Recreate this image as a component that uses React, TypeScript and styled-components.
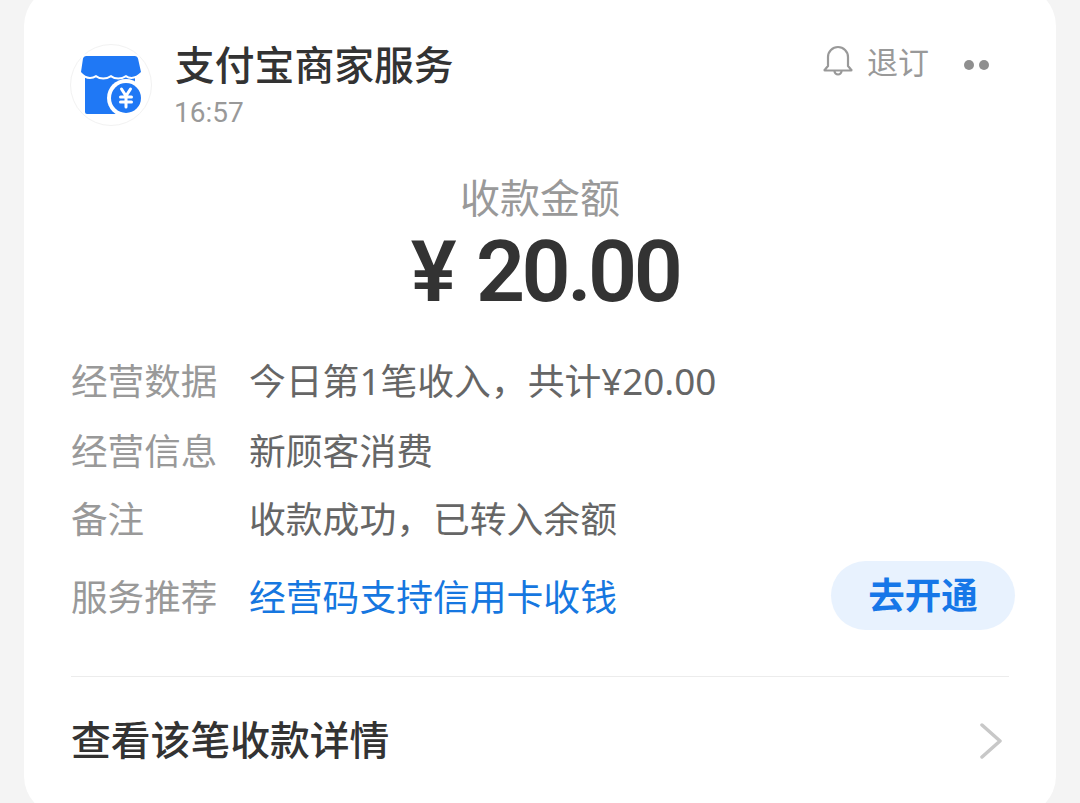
import React from "react";
import styled, { createGlobalStyle } from "styled-components";

const Global = createGlobalStyle`
  html, body { margin: 0; padding: 0; height: 803px; overflow: hidden; background: #f4f4f4; }
  body { font-family: "Noto Sans CJK SC", "Noto Sans", sans-serif; }
`;

const Page = styled.div`
  width: 1080px;
  height: 803px;
  overflow: hidden;
  padding: 0 24px;
  box-sizing: border-box;
`;

const Card = styled.div`
  margin-top: -14px;
  height: 830px;
  background: #ffffff;
  border-radius: 40px;
  padding: 58px 46px 0;
  box-sizing: border-box;
`;

const Header = styled.header`
  display: flex;
  align-items: flex-start;
  height: 82px;
`;

const Avatar = styled.div`
  width: 82px;
  height: 82px;
  flex: none;
  border-radius: 50%;
  border: 1px solid #f2f2f2;
  box-sizing: border-box;
  display: flex;
  align-items: center;
  justify-content: center;
`;

const Titles = styled.div`
  margin-left: 23px;
  flex: 1;
  display: flex;
  flex-direction: column;
`;

const Title = styled.div`
  font-size: 39.8px;
  line-height: 44px;
  margin-top: -3px;
  font-weight: 500;
  color: #333;
`;

const Time = styled.div`
  font-family: "Roboto", "Noto Sans", sans-serif;
  font-size: 28px;
  line-height: 34px;
  margin: 11px 0 0 -1px;
  color: #999;
`;

const Actions = styled.div`
  display: flex;
  align-items: center;
  margin-top: -3px;
  height: 40px;
`;

const Unsub = styled.span`
  font-size: 31px;
  line-height: 40px;
  color: #999;
  margin-left: 14px;
`;

const Dots = styled.div`
  display: flex;
  gap: 5px;
  margin-left: 35px;
  margin-right: 21px;
  margin-top: 7px;
`;

const Dot = styled.i`
  width: 10px;
  height: 10px;
  border-radius: 50%;
  background: #8f8f8f;
`;

const Amount = styled.section`
  display: flex;
  flex-direction: column;
  align-items: center;
  margin-top: 45px;
`;

const AmountLabel = styled.div`
  font-size: 40px;
  line-height: 50px;
  color: #999;
`;

const AmountValue = styled.div`
  font-family: "Roboto", "Noto Sans", sans-serif;
  font-size: 86px;
  line-height: 92px;
  font-weight: 600;
  color: #333;
  letter-spacing: -3.5px;
  word-spacing: 5px;
  margin-top: 5px;
  margin-left: 10px;
  white-space: pre;
`;

const Rows = styled.div`
  display: flex;
  flex-direction: column;
  margin-top: 26px;
  width: 945px;
`;

const Row = styled.div<{ $h: number }>`
  display: flex;
  align-items: center;
  height: ${(p) => p.$h}px;
`;

const Label = styled.span`
  width: 178px;
  margin-left: 1px;
  flex: none;
  font-size: 36.6px;
  color: #999;
`;

const Value = styled.span<{ $link?: boolean }>`
  flex: 1;
  font-family: "Noto Sans", "Noto Sans CJK SC", sans-serif;
  font-size: 36.8px;
  color: ${(p) => (p.$link ? "#1677e0" : "#666")};
`;

const PillButton = styled.button`
  width: 184px;
  height: 69px;
  border: 0;
  border-radius: 35px;
  background: #e8f2fe;
  color: #1677e8;
  font-family: inherit;
  font-size: 36.5px;
  font-weight: 700;
  padding: 0 0 5px;
  margin-top: 1px;
`;

const Divider = styled.hr`
  border: 0;
  height: 1px;
  background: #ececec;
  margin: 36px 0 0 1px;
  width: 938px;
`;

const Footer = styled.div`
  display: flex;
  align-items: center;
  justify-content: space-between;
  height: 128px;
  width: 932px;
`;

const FooterText = styled.span`
  font-size: 39.8px;
  font-weight: 500;
  color: #333;
  margin: 0 0 8px 1px;
`;

function ShopIcon() {
  return (
    <svg width="62" height="62" viewBox="0 0 62 62">
      <path fill="#1f78f5" d="M5 20h50v38a2 2 0 0 1-2 2H7a2 2 0 0 1-2-2z" />
      <path
        fill="#1f78f5"
        stroke="#fff"
        strokeWidth="4"
        paintOrder="stroke"
        d="M6 2h49q2.500 0 3 2.500L61 18Q53 26 46 21 38 26 31 21 23 26 16 21 8 26 1 18L3 4.500Q3.500 2 6 2z"
      />
      <circle cx="46" cy="44" r="19" fill="#fff" />
      <circle cx="46" cy="44" r="15" fill="#1f78f5" />
      <path fill="none" stroke="#fff" strokeWidth="3" strokeLinecap="round" d="M41.500 35l4.500 7 4.500-7M40.500 43h11M40.500 48h11M46 42v11" />
    </svg>
  );
}

function Bell() {
  return (
    <svg width="30" height="32" viewBox="0 0 30 32" fill="none" stroke="#999" strokeWidth="2.200" strokeLinejoin="round" strokeLinecap="round">
      <path d="M5 21V12a10 10 0 0 1 20 0v9l3 3.500a.5.5 0 0 1 0 1H2a.5.5 0 0 1 0-1z" />
      <path d="M11.500 26a3.500 3.500 0 0 0 7 0" />
    </svg>
  );
}

function Chevron() {
  return (
    <svg width="22" height="36" viewBox="0 0 22 36" fill="none" stroke="#c8c8c8" strokeWidth="3.500" strokeLinecap="round" strokeLinejoin="round">
      <path d="M2 2l18 16L2 34" />
    </svg>
  );
}

export default function App() {
  return (
    <>
      <Global />
      <Page>
        <Card>
          <Header>
            <Avatar>
              <ShopIcon />
            </Avatar>
            <Titles>
              <Title>支付宝商家服务</Title>
              <Time>16:57</Time>
            </Titles>
            <Actions>
              <Bell />
              <Unsub>退订</Unsub>
              <Dots>
                <Dot />
                <Dot />
              </Dots>
            </Actions>
          </Header>
          <Amount>
            <AmountLabel>收款金额</AmountLabel>
            <AmountValue>¥ 20.00</AmountValue>
          </Amount>
          <Rows>
            <Row $h={70}>
              <Label>经营数据</Label>
              <Value>今日第1笔收入，共计¥20.00</Value>
            </Row>
            <Row $h={70}>
              <Label>经营信息</Label>
              <Value>新顾客消费</Value>
            </Row>
            <Row $h={66}>
              <Label>备注</Label>
              <Value>收款成功，已转入余额</Value>
            </Row>
            <Row $h={90}>
              <Label>服务推荐</Label>
              <Value $link>经营码支持信用卡收钱</Value>
              <PillButton>去开通</PillButton>
            </Row>
          </Rows>
          <Divider />
          <Footer>
            <FooterText>查看该笔收款详情</FooterText>
            <Chevron />
          </Footer>
        </Card>
      </Page>
    </>
  );
}
